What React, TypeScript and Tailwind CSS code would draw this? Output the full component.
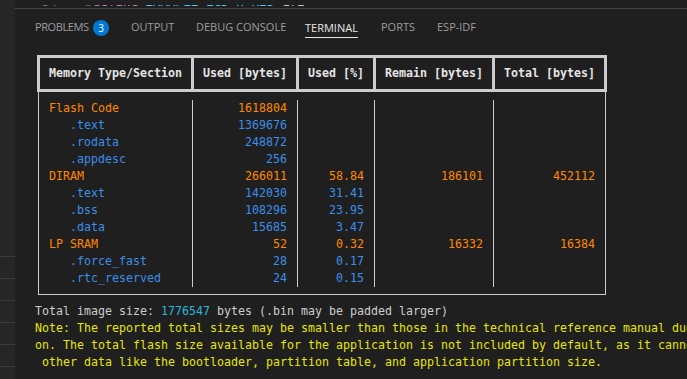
import React from "react";

type Row = {
  name: string;
  used: string;
  pct?: string;
  remain?: string;
  total?: string;
  sub?: boolean;
};

const rows: Row[] = [
  { name: "Flash Code", used: "1618804" },
  { name: ".text", used: "1369676", sub: true },
  { name: ".rodata", used: "248872", sub: true },
  { name: ".appdesc", used: "256", sub: true },
  { name: "DIRAM", used: "266011", pct: "58.84", remain: "186101", total: "452112" },
  { name: ".text", used: "142030", pct: "31.41", sub: true },
  { name: ".bss", used: "108296", pct: "23.95", sub: true },
  { name: ".data", used: "15685", pct: "3.47", sub: true },
  { name: "LP SRAM", used: "52", pct: "0.32", remain: "16332", total: "16384" },
  { name: ".force_fast", used: "28", pct: "0.17", sub: true },
  { name: ".rtc_reserved", used: "24", pct: "0.15", sub: true },
];

const tone = (r: Row) => (r.sub ? "text-[#3b8eea]" : "text-[#ff8700]");

function Tabs() {
  return (
    <div className="flex h-[35px] items-center pt-[2px] pl-[20px] font-['Open_Sans',sans-serif] text-[11px] text-[#9d9d9d]">
      <span className="w-[58px] tracking-[-0.4px]">PROBLEMS</span>
      <span className="flex h-4 w-4 items-center justify-center rounded-full bg-[#0078d4] text-[10px] leading-none text-white">
        3
      </span>
      <span className="ml-[22px] w-[65px]">OUTPUT</span>
      <span className="w-[109px]">DEBUG CONSOLE</span>
      <div className="w-[76px]">
        <span className="inline-block border-b border-[#e7e7e7] pt-[3px] pb-[1px] leading-[16px] text-[#e7e7e7]">
          TERMINAL
        </span>
      </div>
      <span className="w-[56px]">PORTS</span>
      <span>ESP-IDF</span>
    </div>
  );
}

function SizeTable() {
  const head = ["Used [bytes]", "Used [%]", "Remain [bytes]", "Total [bytes]"];
  const widths = ["w-[105px]", "w-[77px]", "w-[119px]", "w-[112px]"];
  const cols: (keyof Row)[] = ["used", "pct", "remain", "total"];

  return (
    <div>
      <div className="ml-[2px] flex w-[570px] border-[3px] border-[#cccccc] font-bold leading-[31px] text-[#e5e5e5]">
        <div className="w-[151px] text-center">Memory Type/Section</div>
        {head.map((h, i) => (
          <div key={h} className={`${widths[i]} border-l-[3px] border-[#cccccc] text-center`}>
            {h}
          </div>
        ))}
      </div>
      <div className="ml-[3px] flex w-[568px] border-x border-b border-[#cccccc] pt-[8px] pb-[7px] leading-[17px]">
        <div className="w-[153px] pl-[10px]">
          {rows.map((r, i) => (
            <div key={i} className={`h-[17px] whitespace-pre ${tone(r)} ${r.sub ? "pl-[21px]" : ""}`}>
              {r.name}
            </div>
          ))}
        </div>
        {cols.map((c, ci) => (
          <div key={c} className={`${widths[ci]} border-l border-[#cccccc] pr-[10px] text-right`}>
            {rows.map((r, i) => (
              <div key={i} className={`h-[17px] ${tone(r)}`}>
                {(r[c] as string) || ""}
              </div>
            ))}
          </div>
        ))}
      </div>
    </div>
  );
}

export default function App() {
  return (
    <div className="flex h-[379px] w-[687px] overflow-hidden bg-[#1f1f1f]">
      {/* side strip */}
      <div className="w-[15px] shrink-0 bg-[#262626] pt-[235px]">
        {[0, 1, 2, 3, 4, 5].map((i) => (
          <div key={i} className="h-[22px] border-b border-[#3c3c3c]" />
        ))}
      </div>

      <div className="flex min-w-0 flex-1 flex-col">
        {/* editor line peeking above the panel */}
        <div className="h-[8px] pt-[5px]">
          <div className="h-[3px] overflow-hidden">
            <div className="-mt-[13px] whitespace-pre font-['DejaVu_Sans_Mono',monospace] text-[12.6px] leading-[19px]">
              <span className="ml-[27px] text-[#6e7681]">34</span>
              <span className="ml-[28px] text-[#c586c0]">#define</span>
              <span className="ml-[7px] text-[#4fc1ff]">EXAMPLE_LCD_H_RES</span>
              <span className="ml-[8px] text-[#b5cea8]">172</span>
            </div>
          </div>
        </div>
        <div className="border-t border-[#454545]">
          <Tabs />
          <div className="mt-[11px] pl-[20px] font-['DejaVu_Sans_Mono',monospace] text-[11.63px] text-[#cccccc]">
            <SizeTable />
            <div className="mt-[8px] whitespace-pre leading-[17px]">
              <div>
                Total image size: <span className="text-[#29b8db]">1776547</span> bytes (.bin may be padded larger)
              </div>
              <div className="text-[#e5e510]">
                Note: The reported total sizes may be smaller than those in the technical reference manual due to reserved memory and application overhead.
              </div>
              <div className="text-[#e5e510]">
                on. The total flash size available for the application is not included by default, as it cannot be calculated due to
              </div>
              <div className="text-[#e5e510]"> other data like the bootloader, partition table, and application partition size.</div>
            </div>
          </div>
        </div>
      </div>
    </div>
  );
}
